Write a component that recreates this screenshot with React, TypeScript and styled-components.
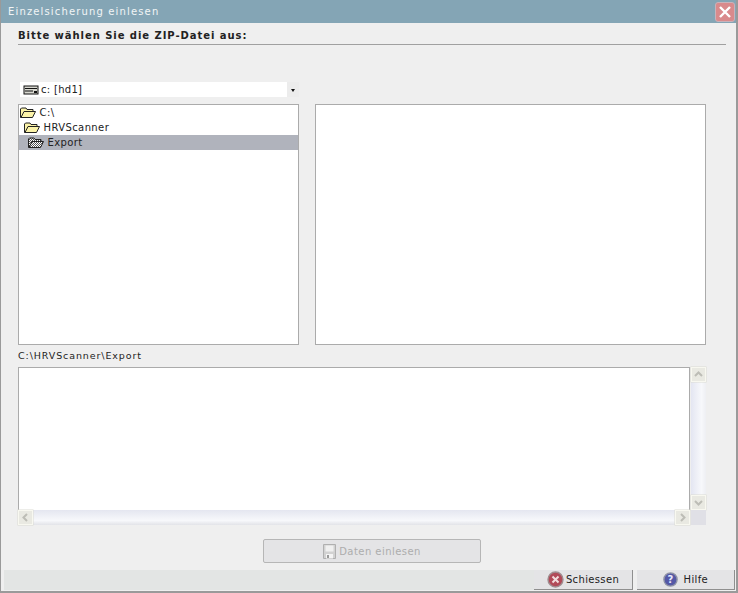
import React from "react";
import styled, { createGlobalStyle } from "styled-components";

const Global = createGlobalStyle`
  html, body { margin: 0; padding: 0; background: #efefef; }
  * { box-sizing: border-box; }
  body { font-family: "DejaVu Sans", Verdana, sans-serif; font-size: 10px; color: #111; }
`;
const Win = styled.div`
  width: 738px; height: 593px; display: flex; flex-direction: column;
  background: #efefef; border-left: 1px solid #9a9a9a; border-right: 2px solid #9a9a9a; border-bottom: 2px solid #9a9a9a;
  overflow: hidden;
`;
const TitleBar = styled.div`
  height: 23px; flex: none; background: #84a5b5; display: flex; align-items: center; justify-content: space-between;
  padding: 0 1px 1px 7px; color: #f2f5f6; font-size: 10px; letter-spacing: 1.15px;
`;
const CloseBtn = styled.div`
  width: 20px; height: 20px; border-radius: 3px; background: #d98a8c; border: 1px solid #c9b3bb;
  display: flex; align-items: center; justify-content: center; margin-top: 1px;
`;
const Body = styled.div`
  flex: 1; display: flex; flex-direction: column; padding: 6px 10px 0 17px; min-height: 0;
`;
const Heading = styled.div`
  height: 16px; line-height: 13px; font-weight: bold; font-size: 10px; letter-spacing: 0.95px; color: #222;
  border-bottom: 1px solid #a0a0a0;
`;
const Combo = styled.div`
  width: 279px; height: 15px; margin: 37px 0 7px 2px; background: #fff; display: flex; align-items: center; padding-left: 3px; gap: 2px;
  font-size: 10px; letter-spacing: 0.3px;
`;
const ComboText = styled.span` flex: 1; color: #222; `;
const ComboArrow = styled.div`
  width: 12px; height: 15px; background: #ececec; display: flex; align-items: center; justify-content: center;
  &::after { content: ""; border-left: 2.5px solid transparent; border-right: 2.5px solid transparent; border-top: 3px solid #111; margin-top: 2px; }
`;
const Panes = styled.div` display: flex; gap: 16px; height: 241px; `;
const Pane = styled.div<{ $w: number }>`
  width: ${p => p.$w}px; height: 241px; background: #fff; border: 1px solid #ababab;
`;
const TreeRow = styled.div<{ $indent: number; $sel?: boolean }>`
  height: 15px; display: flex; align-items: center; gap: 3.5px; padding-left: ${p => p.$indent}px;
  background: ${p => (p.$sel ? "#b0b3bc" : "transparent")}; color: #222; letter-spacing: 0.4px;
`;
const PathLabel = styled.div` height: 22px; line-height: 22px; font-size: 9.5px; letter-spacing: 0.9px; color: #222; `;
const ScrollGrid = styled.div`
  width: 688px; display: grid; grid-template-columns: 672px 16px; grid-template-rows: 143px 15px;
`;
const TextArea = styled.div` background: #fff; border-top: 1px solid #ababab; border-left: 1px solid #ababab; border-right: 1px solid #ababab; `;
const VTrack = styled.div`
  background: linear-gradient(90deg, #e4e6f2, #f7f8fb 70%, #eeeff3); display: flex; flex-direction: column; justify-content: space-between;
  margin-left: 1px;
`;
const HTrack = styled.div`
  background: linear-gradient(180deg, #e4e6f0, #f7f8fb 70%, #e2e3e8); display: flex; justify-content: space-between;
`;
const Corner = styled.div` background: #e0e0e6; margin-left: 1px; `;
const ScrollBtn = styled.div`
  width: 15px; height: 15px; background: #e9e9e2; border: 1px solid #f8f8f0; box-shadow: 0 0 0 0.5px #dcdcd4; display: flex; align-items: center; justify-content: center;
`;
const ActionRow = styled.div` display: flex; justify-content: flex-start; padding: 14px 0 0 245px; `;
const DisabledBtn = styled.div`
  width: 218px; height: 24px; background: #e4e4e6; border: 1px solid #b6b6b6; border-radius: 2px;
  display: flex; align-items: center; justify-content: center; gap: 3px; color: #adadad; letter-spacing: 0.45px;
`;
const Footer = styled.div`
  height: 20px; display: flex; margin: 7px 0 1px 3px; flex: none;
`;
const Status = styled.div` width: 530px; background: #e3e5e4; `;
const FootBtn = styled.div<{ $w: number; $ml: number }>`
  width: ${p => p.$w}px; margin-left: ${p => p.$ml}px; background: #e4e4e6; border-right: 1px solid #8f8f8f; border-bottom: 1px solid #8f8f8f;
  display: flex; align-items: center; justify-content: center; gap: 2px; color: #222; letter-spacing: 0.35px; font-size: 10px;
`;

const Folder = ({ hatched }: { hatched?: boolean }) => (
  <svg width="16" height="13" viewBox="0 0 16 13">
    <defs>
      <pattern id="ht" width="2" height="2" patternUnits="userSpaceOnUse">
        <rect width="2" height="2" fill="#fff" /><rect width="1" height="1" fill="#555" /><rect x="1" y="1" width="1" height="1" fill="#555" />
      </pattern>
    </defs>
    <path d="M0.5 3V11.5H12.5L15.5 5.5H13V3.5H7L6 2H1.5Z" fill={hatched ? "url(#ht)" : "#fbf3a8"} stroke="#222" strokeWidth="1" />
    <path d="M1 11.5L4 5.5H15" fill="none" stroke="#222" strokeWidth="1" />
  </svg>
);
const Drive = () => (
  <svg width="16" height="10" viewBox="0 0 16 10">
    <rect x="1" y="1" width="14" height="8" fill="#d8d8d0" stroke="#111" />
    <path d="M2 3.5H14M2 6H10" stroke="#111" />
    <rect x="11" y="6" width="3" height="2" fill="#111" />
  </svg>
);
const Chevron = ({ d }: { d: string }) => (
  <svg width="11" height="11" viewBox="0 0 11 11"><path d={d} fill="none" stroke="#bdbdb6" strokeWidth="2" /></svg>
);
const Floppy = () => (
  <svg width="13" height="15" viewBox="0 0 13 15">
    <path d="M0.5 0.5H12.5V14.5H0.5Z" fill="#d2d2d2" stroke="#b0b0b0" />
    <rect x="2.5" y="1.5" width="8" height="6" fill="#f0f0f0" />
    <rect x="3" y="10" width="7" height="4.5" fill="#f4f4f4" />
    <rect x="4" y="11" width="2" height="3" fill="#999" />
  </svg>
);
const CloseIcon = () => (
  <svg width="16" height="16" viewBox="0 0 16 16"><path d="M3 3L13 13M13 3L3 13" stroke="#fff" strokeWidth="2.4" /></svg>
);
const ExitIcon = () => (
  <svg width="17" height="17" viewBox="0 0 17 17">
    <circle cx="8.5" cy="8.5" r="7.5" fill="#b14a58" stroke="#a08d90" strokeWidth="1.4" />
    <path d="M5.5 5.5L11.5 11.5M11.5 5.5L5.5 11.5" stroke="#f1dcdc" strokeWidth="2" />
  </svg>
);
const HelpIcon = () => (
  <svg width="15" height="15" viewBox="0 0 15 15">
    <circle cx="7.5" cy="7.5" r="6.6" fill="#5458a6" stroke="#8f93a6" strokeWidth="1.4" />
    <text x="7.5" y="11.2" textAnchor="middle" fontSize="10" fontWeight="bold" fill="#e8e8ff" fontFamily="DejaVu Sans">?</text>
  </svg>
);

export default function App() {
  return (
    <Win>
      <Global />
      <TitleBar>
        <span>Einzelsicherung einlesen</span>
        <CloseBtn><CloseIcon /></CloseBtn>
      </TitleBar>
      <Body>
        <Heading>Bitte wählen Sie die ZIP-Datei aus:</Heading>
        <Combo>
          <Drive />
          <ComboText>c: [hd1]</ComboText>
          <ComboArrow />
        </Combo>
        <Panes>
          <Pane $w={281}>
            <TreeRow $indent={1}><Folder /><span>C:\</span></TreeRow>
            <TreeRow $indent={5}><Folder /><span>HRVScanner</span></TreeRow>
            <TreeRow $indent={9} $sel><Folder hatched /><span>Export</span></TreeRow>
          </Pane>
          <Pane $w={391} />
        </Panes>
        <PathLabel>C:\HRVScanner\Export</PathLabel>
        <ScrollGrid>
          <TextArea />
          <VTrack>
            <ScrollBtn><Chevron d="M2 7L5.5 3.5L9 7" /></ScrollBtn>
            <ScrollBtn><Chevron d="M2 4L5.5 7.5L9 4" /></ScrollBtn>
          </VTrack>
          <HTrack>
            <ScrollBtn><Chevron d="M7 2L3.5 5.5L7 9" /></ScrollBtn>
            <ScrollBtn><Chevron d="M4 2L7.5 5.5L4 9" /></ScrollBtn>
          </HTrack>
          <Corner />
        </ScrollGrid>
        <ActionRow>
          <DisabledBtn><Floppy /><span>Daten einlesen</span></DisabledBtn>
        </ActionRow>
      </Body>
      <Footer>
        <Status />
        <FootBtn $w={99} $ml={0}><ExitIcon /><span>Schiessen</span></FootBtn>
        <FootBtn $w={98} $ml={4}><HelpIcon /><span>&nbsp;Hilfe</span></FootBtn>
      </Footer>
    </Win>
  );
}
